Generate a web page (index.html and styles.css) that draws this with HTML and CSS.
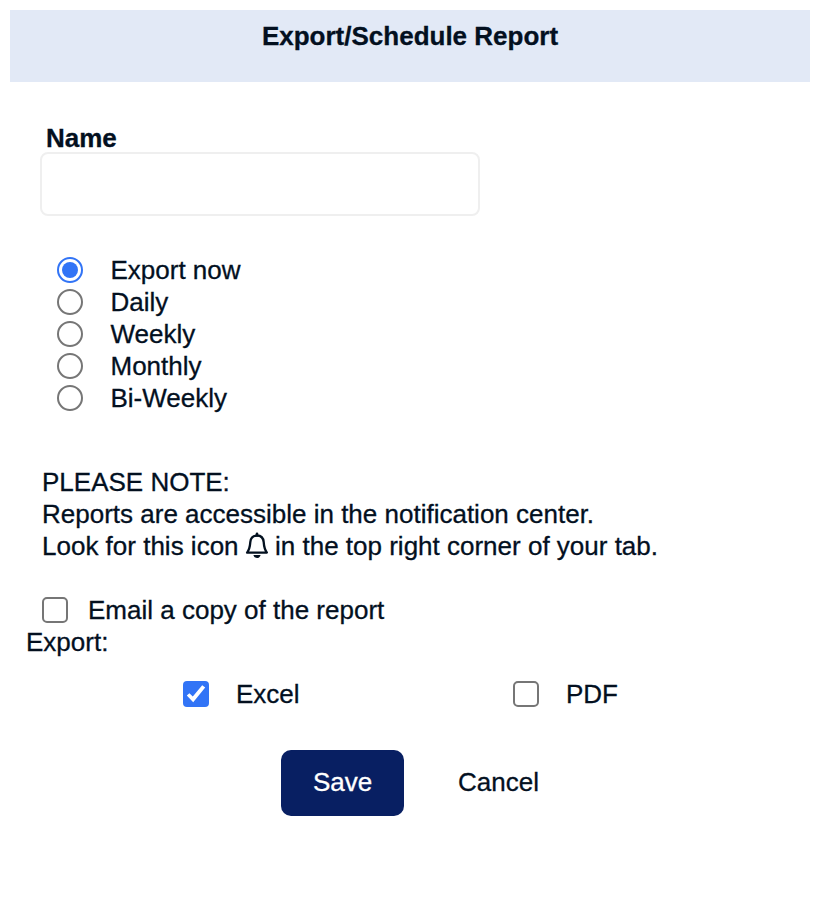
FILE: index.html
```
<!DOCTYPE html>
<html lang="en">
<head>
    <meta charset="UTF-8">
    <meta name="viewport" content="width=device-width, initial-scale=1.0">
    <title>Export/Schedule Report</title>
    <link rel="stylesheet" href="styles.css">
</head>
<body>
    <div class="header">
        <h1>Export/Schedule Report</h1>
    </div>

    <form class="report-form">
        <div class="name-field">
            <label for="name">Name</label>
            <input type="text" id="name">
        </div>

        <div class="schedule">
            <label><input type="radio" name="schedule" value="now" checked>Export now</label>
            <label><input type="radio" name="schedule" value="daily">Daily</label>
            <label><input type="radio" name="schedule" value="weekly">Weekly</label>
            <label><input type="radio" name="schedule" value="monthly">Monthly</label>
            <label><input type="radio" name="schedule" value="biweekly">Bi-Weekly</label>
        </div>

        <div class="note">
            <p>PLEASE NOTE:</p>
            <p>Reports are accessible in the notification center.</p>
            <p>Look for this icon <svg class="bell" viewBox="0 0 24 28" width="24" height="28">
                <path d="M12 3.5C7.8 3.5 5.6 6.3 5.3 10.2C5 14.6 4.6 17.4 2.1 20.6H21.9C19.4 17.4 19 14.6 18.7 10.2C18.4 6.3 16.2 3.5 12 3.5Z" fill="none" stroke="currentColor" stroke-width="2.3" stroke-linejoin="round"/>
                <path d="M12 1.7V3.4" stroke="currentColor" stroke-width="2.6" stroke-linecap="round"/>
                <path d="M8.4 22.9H15.6C15.1 24.9 13.8 26 12 26S8.9 24.9 8.4 22.9Z" fill="currentColor"/>
            </svg> in the top right corner of your tab.</p>
        </div>

        <label class="email-copy"><input type="checkbox" name="email">Email a copy of the report</label>

        <p class="export-title">Export:</p>
        <div class="formats">
            <label><input type="checkbox" name="excel" checked>Excel</label>
            <label><input type="checkbox" name="pdf">PDF</label>
        </div>

        <div class="actions">
            <button type="button" class="btn btn-save">Save</button>
            <button type="button" class="btn btn-cancel">Cancel</button>
        </div>
    </form>
</body>
</html>
```
FILE: styles.css
```
/* General reset */
* {
    margin: 0;
    padding: 0;
    box-sizing: border-box;
}

body {
    font-family: "Liberation Sans", Arial, sans-serif;
    font-size: 26px;
    line-height: 32px;
    color: #03101f;
    background: #fff;
    padding: 10px;
    -webkit-text-stroke: 0.3px;
}

.header {
    height: 72px;
    padding-top: 10px;
    background: #e2e9f6;
    text-align: center;
}

h1 {
    font-size: 26px;
    font-weight: bold;
}

.report-form {
    padding: 40px 16px 0;
}

.name-field {
    display: flex;
    flex-direction: column;
    width: 440px;
    margin-left: 14px;
}

.name-field label {
    height: 30px;
    padding-left: 6px;
    font-weight: bold;
}

input[type="text"] {
    width: 100%;
    height: 64px;
    padding: 0 14px;
    border: 2px solid #efefef;
    border-radius: 8px;
    font: inherit;
    color: inherit;
}

/* Radios and checkboxes */
input[type="radio"],
input[type="checkbox"] {
    appearance: none;
    flex: none;
    width: 26px;
    height: 26px;
    border: 2px solid #767676;
    background: #fff;
}

input[type="radio"] {
    border-radius: 50%;
}

input[type="checkbox"] {
    border-radius: 5px;
}

input[type="radio"]:checked {
    border-color: #3274f6;
    padding: 3px;
    background: #3274f6 content-box;
}

input[type="checkbox"]:checked {
    border: none;
    border-radius: 4px;
    background: #3274f6;
}

input[type="checkbox"]:checked::before {
    content: "";
    display: block;
    width: 26px;
    height: 26px;
    background: #fff;
    clip-path: polygon(3.8px 14.6px, 6.4px 12.2px, 9.8px 15.6px, 19.2px 4.2px, 22.2px 6.6px, 10.2px 21.2px);
}

.schedule {
    display: flex;
    flex-direction: column;
    margin: 38px 0 0 31px;
}

.schedule label,
.formats label {
    display: flex;
    align-items: center;
    gap: 27px;
}

.schedule label {
    gap: 27.5px;
}

.note {
    margin: 52px 0 32px 16px;
}

.note p {
    height: 32px;
    white-space: nowrap;
}

.bell {
    vertical-align: -5px;
    margin: 0 -1px;
}

.email-copy {
    display: flex;
    align-items: center;
    gap: 20px;
    margin-left: 16px;
}

.formats {
    display: grid;
    grid-template-columns: 330px 330px;
    margin: 20px 0 0 157px;
}

.actions {
    display: flex;
    gap: 22px;
    margin: 40px 0 0 255px;
}

.btn {
    height: 66px;
    padding: 0 32px 2px;
    border: none;
    border-radius: 10px;
    font: inherit;
    cursor: pointer;
}

.btn-save {
    width: 123px;
    background: #081f62;
    color: #fff;
}

.btn-cancel {
    background: none;
    color: #03101f;
}
```
